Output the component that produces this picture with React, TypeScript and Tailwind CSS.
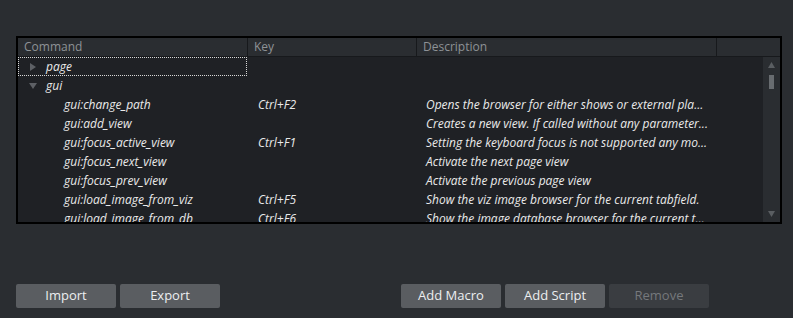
import React from "react";

const rows: { cmd: string; key: string; desc: string; level: number; kind?: "closed" | "open"; focus?: boolean }[] = [
  { cmd: "page", key: "", desc: "", level: 0, kind: "closed", focus: true },
  { cmd: "gui", key: "", desc: "", level: 0, kind: "open" },
  { cmd: "gui:change_path", key: "Ctrl+F2", desc: "Opens the browser for either shows or external pla...", level: 1 },
  { cmd: "gui:add_view", key: "", desc: "Creates a new view. If called without any parameter...", level: 1 },
  { cmd: "gui:focus_active_view", key: "Ctrl+F1", desc: "Setting the keyboard focus is not supported any mo...", level: 1 },
  { cmd: "gui:focus_next_view", key: "", desc: "Activate the next page view", level: 1 },
  { cmd: "gui:focus_prev_view", key: "", desc: "Activate the previous page view", level: 1 },
  { cmd: "gui:load_image_from_viz", key: "Ctrl+F5", desc: "Show the viz image browser for the current tabfield.", level: 1 },
  { cmd: "gui:load_image_from_db", key: "Ctrl+F6", desc: "Show the image database browser for the current t...", level: 1 },
];

function Btn({ label, disabled }: { label: string; disabled?: boolean }) {
  return (
    <div
      className={`w-[100px] h-[24px] rounded-[2px] flex items-center justify-center text-[13px] ${
        disabled ? "bg-[#3a3d41] text-[#75787c]" : "bg-[#5a5d61] text-[#eceef0]"
      }`}
    >
      {label}
    </div>
  );
}

export default function App() {
  return (
    <div
      className="w-[793px] h-[318px] bg-[#2a2d31] overflow-hidden flex flex-col"
      style={{ fontFamily: "'Open Sans', 'Noto Sans', sans-serif" }}
    >
      <div className="pt-[36px] pl-[16px]">
        <div className="w-[766px] h-[188px] border-2 border-black flex flex-col bg-[#1f2125]">
          {/* header */}
          <div className="h-[19px] flex bg-[#2a2d31] border-b border-[#17191c] text-[12px] text-[#8e9296] leading-[18px]">
            <div className="w-[230px] pl-[6px] border-r border-[#17191c]">Command</div>
            <div className="w-[169px] pl-[6px] border-r border-[#17191c]">Key</div>
            <div className="w-[300px] pl-[6px] border-r border-[#17191c]">Description</div>
            <div className="flex-1" />
          </div>
          {/* body */}
          <div className="flex-1 flex overflow-hidden">
            <div className="w-[745px] overflow-hidden">
              {rows.map((r, i) => (
                <div key={i} className="h-[19px] flex text-[12px] italic text-[#eaeaea] leading-[19px] whitespace-nowrap">
                  <div
                    className={`w-[229px] relative flex items-center ${
                      r.focus ? "border border-dotted border-[#d8d8d8]" : ""
                    }`}
                  >
                    {r.kind === "closed" && (
                      <svg className="absolute left-[11px] top-[5px]" width="7" height="8" viewBox="0 0 7 8">
                        <path d="M0 0 L6 4 L0 8 Z" fill="#5d6065" />
                      </svg>
                    )}
                    {r.kind === "open" && (
                      <svg className="absolute left-[11px] top-[7px]" width="8" height="6" viewBox="0 0 8 6">
                        <path d="M0 0 L8 0 L4 6 Z" fill="#5d6065" />
                      </svg>
                    )}
                    <span className={r.level === 0 ? (r.focus ? "pl-[27px]" : "pl-[28px]") : "pl-[46px]"}>{r.cmd}</span>
                  </div>
                  <div className="w-[169px] pl-[11px]">{r.key}</div>
                  <div className="flex-1 pl-[10px] overflow-hidden">{r.desc}</div>
                </div>
              ))}
            </div>
            <div className="w-[17px] bg-[#2a2d31] flex flex-col items-center">
              <svg className="mt-[5px]" width="7" height="6" viewBox="0 0 7 6">
                <path d="M3.5 0 L7 6 L0 6 Z" fill="#5a5e62" />
              </svg>
              <div className="mt-[7px] w-[5px] h-[14px] bg-[#686c70]" />
              <div className="flex-1" />
              <svg className="mb-[5px]" width="7" height="6" viewBox="0 0 7 6">
                <path d="M0 0 L7 0 L3.5 6 Z" fill="#5a5e62" />
              </svg>
            </div>
          </div>
        </div>
      </div>
      <div className="mt-[60px] pl-[16px] flex">
        <div className="flex gap-[4px]">
          <Btn label="Import" />
          <Btn label="Export" />
        </div>
        <div className="ml-[181px] flex gap-[4px]">
          <Btn label="Add Macro" />
          <Btn label="Add Script" />
          <Btn label="Remove" disabled />
        </div>
      </div>
    </div>
  );
}
